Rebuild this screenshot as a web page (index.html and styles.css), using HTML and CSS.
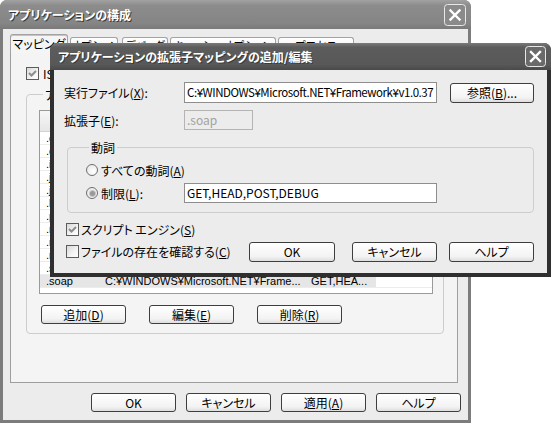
FILE: index.html
```html
<!DOCTYPE html>
<html lang="ja">
<head>
<meta charset="utf-8">
<title>アプリケーションの構成</title>
<link rel="stylesheet" href="styles.css">
</head>
<body>
<div class="desk">
  <div class="win outer">
    <div class="titlebar">
      <span class="title">アプリケーションの構成</span>
      <span class="close close-outer"><svg width="22" height="22" viewBox="0 0 22 22"><rect x="0.5" y="0.5" width="21" height="21" rx="3" fill="#8a8a8a" stroke="#e8e8e8"/><path d="M6.5 6.5 L15.5 15.5 M15.5 6.5 L6.5 15.5" stroke="#fff" stroke-width="2.4" stroke-linecap="square"/></svg></span>
    </div>
    <div class="outer-body">
      <div class="tabs">
        <div class="tab sel">マッピング</div>
        <div class="tab">オプション</div>
        <div class="tab">デバッグ</div>
        <div class="tab">キャッシュ オプション</div>
        <div class="tab">プロセス</div>
      </div>
      <div class="tabpage">
        <div class="chk-row"><span class="cb checked"><svg width="11" height="11" viewBox="0 0 11 11"><path d="M2 5 L4.5 7.5 L9 3" fill="none" stroke="#8c8c8c" stroke-width="2"/></svg></span><span>ISAPI 拡張をキャッシュする(<u>X</u>)</span></div>
        <fieldset class="grp ext">
          <legend>アプリケーション拡張子</legend>
          <div class="list">
            <div class="lhead"><span class="c1">拡張子</span><span class="c2">実行可能パス</span><span class="c3">動詞</span></div>
            <div class="lrow"><span class="c1">.cs</span><span class="c2">C:¥WINDOWS¥Microsoft.NET¥Frame...</span><span class="c3">GET,HEA...</span></div>
            <div class="lrow"><span class="c1">.csproj</span><span class="c2">C:¥WINDOWS¥Microsoft.NET¥Frame...</span><span class="c3">GET,HEA...</span></div>
            <div class="lrow"><span class="c1">.idc</span><span class="c2">C:¥WINDOWS¥system32¥inetsrv¥...</span><span class="c3">OPTIONS...</span></div>
            <div class="lrow"><span class="c1">.java</span><span class="c2">C:¥WINDOWS¥Microsoft.NET¥Frame...</span><span class="c3">GET,HEA...</span></div>
            <div class="lrow"><span class="c1">.jsl</span><span class="c2">C:¥WINDOWS¥Microsoft.NET¥Frame...</span><span class="c3">GET,HEA...</span></div>
            <div class="lrow"><span class="c1">.licx</span><span class="c2">C:¥WINDOWS¥Microsoft.NET¥Frame...</span><span class="c3">GET,HEA...</span></div>
            <div class="lrow"><span class="c1">.printer</span><span class="c2">C:¥WINDOWS¥msprint2.dll</span><span class="c3">GET,POST</span></div>
            <div class="lrow"><span class="c1">.rem</span><span class="c2">C:¥WINDOWS¥Microsoft.NET¥Frame...</span><span class="c3">GET,HEA...</span></div>
            <div class="lrow"><span class="c1">.resources</span><span class="c2">C:¥WINDOWS¥Microsoft.NET¥Frame...</span><span class="c3">GET,HEA...</span></div>
            <div class="lrow"><span class="c1">.resx</span><span class="c2">C:¥WINDOWS¥Microsoft.NET¥Frame...</span><span class="c3">GET,HEA...</span></div>
            <div class="lrow"><span class="c1">.shtm</span><span class="c2">C:¥WINDOWS¥system32¥inetsrv¥...</span><span class="c3">GET,POST</span></div>
            <div class="lrow selrow"><span class="c1">.soap</span><span class="c2">C:¥WINDOWS¥Microsoft.NET¥Frame...</span><span class="c3">GET,HEA...</span></div>
          </div>
          <div class="list-btns">
            <button class="btn">追加(<u>D</u>)</button>
            <button class="btn">編集(<u>E</u>)</button>
            <button class="btn">削除(<u>R</u>)</button>
          </div>
        </fieldset>
      </div>
      <div class="dlg-btns">
        <button class="btn">OK</button>
        <button class="btn">キャンセル</button>
        <button class="btn">適用(<u>A</u>)</button>
        <button class="btn">ヘルプ</button>
      </div>
    </div>
  </div>

  <div class="win inner">
    <div class="titlebar">
      <span class="title">アプリケーションの拡張子マッピングの追加/編集</span>
      <span class="close close-inner"><svg width="21" height="21" viewBox="0 0 21 21"><rect x="0.5" y="0.5" width="20" height="20" rx="3" fill="#6a6a6a" stroke="#e8e8e8"/><path d="M6 6 L15 15 M15 6 L6 15" stroke="#fff" stroke-width="2.4" stroke-linecap="square"/></svg></span>
    </div>
    <div class="inner-body">
      <div class="row r1">
        <span class="lbl">実行ファイル(<u>X</u>):</span>
        <span class="inp inp-exe">C:¥WINDOWS¥Microsoft.NET¥Framework¥v1.0.37</span>
        <button class="btn btn-browse">参照(<u>B</u>)...</button>
      </div>
      <div class="row r2">
        <span class="lbl">拡張子(<u>E</u>):</span>
        <span class="inp inp-ext">.soap</span>
      </div>
      <fieldset class="grp verb">
        <legend>動詞</legend>
        <div class="row radio-row rr1">
          <span class="rb"></span><span>すべての動詞(<u>A</u>)</span>
        </div>
        <div class="row radio-row rr2">
          <span class="rlabel"><span class="rb on"><span class="dot"></span></span><span>制限(<u>L</u>):</span></span>
          <span class="inp inp-verbs">GET,HEAD,POST,DEBUG</span>
        </div>
      </fieldset>
      <div class="row chk-a">
        <span class="cb checked"><svg width="11" height="11" viewBox="0 0 11 11"><path d="M2 5 L4.5 7.5 L9 3" fill="none" stroke="#8c8c8c" stroke-width="2"/></svg></span><span>スクリプト エンジン(<u>S</u>)</span>
      </div>
      <div class="row chk-b">
        <span class="cb"></span><span class="chk-b-label">ファイルの存在を確認する(<u>C</u>)</span>
        <button class="btn b-ok">OK</button>
        <button class="btn b-cancel">キャンセル</button>
        <button class="btn b-help">ヘルプ</button>
      </div>
    </div>
  </div>
</div>
</body>
</html>
```
FILE: styles.css
```css
html, body {
  margin: 0;
  padding: 0;
  background: #ffffff;
}
body {
  font-family: "Noto Sans CJK JP", "Noto Sans", sans-serif;
  font-size: 12px;
  font-feature-settings: "palt" 1;
  color: #000;
}
u { text-decoration: underline; text-underline-offset: 1px; }

.desk {
  position: relative;
  width: 551px;
  height: 423px;
  overflow: hidden;
}

.win {
  position: absolute;
  display: flex;
  flex-direction: column;
  box-sizing: border-box;
  border-radius: 7px 7px 0 0;
  overflow: hidden;
}

.titlebar {
  display: flex;
  align-items: center;
  justify-content: space-between;
  flex: none;
}
.title {
  color: #fff;
  font-weight: bold;
  font-size: 12px;
  line-height: 14px;
  text-shadow: 1px 1px 0 #3a3a3a;
  white-space: nowrap;
}
.close { display: block; line-height: 0; }
.close svg { display: block; }

/* ---------- outer window ---------- */
.outer {
  left: 0;
  top: 0;
  width: 471px;
  height: 423px;
  background: #7c7c7c;
  z-index: 0;
}
.outer .titlebar {
  height: 29px;
  padding: 0 5px 0 8px;
  background: linear-gradient(#a2a2a2, #8c8c8c 18%, #858585 80%, #7a7a7a);
}
.outer-body {
  flex: 1;
  margin: 0 3px 3px;
  background: #ececec;
  padding: 6px 0 0 7px;
  display: flex;
  flex-direction: column;
}

.tabs {
  display: flex;
  align-items: flex-end;
  height: 18px;
  position: relative;
  z-index: 1;
  margin-bottom: -1px;
}
.tab {
  box-sizing: border-box;
  height: 16px;
  border: 1px solid #a3a3a3;
  border-bottom: 0;
  border-radius: 3px 3px 0 0;
  background: linear-gradient(#ffffff, #ededed);
  font-size: 11px;
  line-height: 15px;
  text-align: center;
  white-space: nowrap;
  margin-right: 2px;
}
.tab.sel {
  height: 19px;
  font-size: 12px;
  line-height: 17px;
  background: #f5f5f5;
  box-shadow: inset 0 1px 0 #c4c4c4;
}
.tab:nth-child(1) { width: 58px; }
.tab:nth-child(2) { width: 48px; }
.tab:nth-child(3) { width: 46px; margin-left: 2px; }
.tab:nth-child(4) { width: 106px; }
.tab:nth-child(5) { width: 76px; }

.tabpage {
  box-sizing: border-box;
  width: 448px;
  height: 331px;
  border: 1px solid #9e9e9e;
  background: #f4f4f4;
  padding: 14px 0 0 15px;
}

.chk-row {
  display: flex;
  align-items: center;
  height: 13px;
  gap: 4px;
  white-space: nowrap;
}

.cb {
  box-sizing: border-box;
  width: 13px;
  height: 13px;
  flex: none;
  border: 1px solid #5c5c5c;
  background: linear-gradient(135deg, #d8d8d8, #f4f4f4 60%, #ffffff);
  display: flex;
  align-items: center;
  justify-content: center;
}
.cb svg { display: block; }

.grp {
  margin: 0;
  border: 1px solid #cdcdcd;
  border-radius: 4px;
  box-sizing: border-box;
}
.grp legend {
  padding: 0 2px;
  margin-left: 4px;
  line-height: 13px;
  height: 13px;
  white-space: nowrap;
}

.ext {
  margin-top: 8px;
  width: 418px;
  padding: 9px 0 9px 12px;
}

.list {
  box-sizing: border-box;
  width: 394px;
  height: 184px;
  border: 1px solid #9a9a9a;
  background: #fff;
  overflow: hidden;
}
.lhead {
  display: flex;
  height: 21px;
  line-height: 20px;
  background: linear-gradient(#f7f7f7, #e6e6e6);
  border-bottom: 1px solid #d2d2d2;
  box-sizing: border-box;
}
.lrow {
  display: flex;
  height: 13px;
  line-height: 13px;
  border-bottom: 1px solid #ececec;
  box-sizing: border-box;
  white-space: nowrap;
}
.lrow span, .lhead span {
  box-sizing: border-box;
  white-space: nowrap;
  font-family: "Liberation Sans", "Noto Sans CJK JP", sans-serif;
  font-size: 11px;
}
.lhead span {
  font-family: "Noto Sans CJK JP", sans-serif;
  font-size: 12px;
  border-right: 1px solid #d0d0d0;
}
.c1 { width: 60px; padding-left: 6px; }
.c2 { width: 206px; padding-left: 5px; }
.c3 { width: 70px; padding-left: 5px; }
.lhead .c1 { padding-left: 14px; }
.selrow .c1, .selrow .c2, .selrow .c3 { background: #e6e6e6; }

.list-btns {
  display: flex;
  margin-top: 11px;
  padding-left: 2px;
  gap: 23px;
}

.btn {
  box-sizing: border-box;
  width: 85px;
  height: 19px;
  padding: 0;
  margin: 0;
  border: 1px solid #3e3e3e;
  border-radius: 3px;
  background: linear-gradient(#ffffff, #f3f3f3 75%, #dedede);
  font-family: inherit;
  font-size: 12px;
  font-feature-settings: "palt" 1;
  line-height: 15px;
  color: #000;
  white-space: nowrap;
}

.dlg-btns {
  display: flex;
  justify-content: flex-end;
  gap: 10px;
  margin-top: 10px;
  padding-right: 7px;
}

/* ---------- inner dialog ---------- */
.inner {
  left: 50px;
  top: 43px;
  width: 501px;
  height: 234px;
  background: #2f2f2f;
  z-index: 2;
}
.inner .titlebar {
  height: 27px;
  padding: 0 5px 0 8px;
  background: linear-gradient(#7a7a7a, #5c5c5c 16%, #585858 80%, #4a4a4a);
}
.inner-body {
  flex: 1;
  margin: 0 4px 4px;
  background: #ececec;
  padding: 12px 13px 0 10px;
}

.row {
  display: flex;
  align-items: center;
  white-space: nowrap;
}
.lbl { width: 120px; flex: none; }

.inp {
  box-sizing: border-box;
  display: block;
  flex: none;
  border: 1px solid #8e8e8e;
  background: #fff;
  padding: 0 2px;
  line-height: 19px;
  overflow: hidden;
  white-space: nowrap;
  font-size: 12px;
}
.r1 { height: 21px; }
.inp-exe {
  width: 253px;
  height: 21px;
  font-size: 11.5px;
  letter-spacing: -0.45px;
}
.btn-browse { margin-left: 13px; height: 20px; }

.r2 { margin-top: 7px; height: 20px; }
.inp-ext {
  width: 69px;
  height: 20px;
  background: #ececec;
  border-color: #b4b4b4;
  color: #a2a2a2;
  line-height: 18px;
}

.verb {
  margin: 11px 0 0 3px;
  width: 467px;
  padding: 8px 0 9px 18px;
}
.verb legend { margin-left: 3px; }
.rr1 { height: 16px; gap: 3px; }
.rr2 { margin-top: 5px; height: 20px; }
.rlabel {
  display: flex;
  align-items: center;
  gap: 3px;
  width: 98px;
}
.inp-verbs { width: 253px; height: 20px; line-height: 18px; }

.rb {
  box-sizing: border-box;
  width: 12px;
  height: 12px;
  flex: none;
  border: 1px solid #6e6e6e;
  border-radius: 50%;
  background: radial-gradient(circle at 65% 65%, #ffffff, #e4e4e4);
  display: flex;
  align-items: center;
  justify-content: center;
}
.rb .dot {
  width: 5px;
  height: 5px;
  border-radius: 50%;
  background: #9a9a9a;
  box-shadow: 0 0 0 1px #c4c4c4;
}

.chk-a { margin: 9px 0 0 2px; height: 15px; gap: 2px; }
.chk-b { margin: 4px 0 0 2px; height: 21px; gap: 2px; }
.chk-b-label { flex: 1; }
.b-ok { width: 86px; height: 20px; }
.b-cancel { margin-left: 15px; height: 20px; }
.b-help { margin-left: 10px; height: 20px; }
```
